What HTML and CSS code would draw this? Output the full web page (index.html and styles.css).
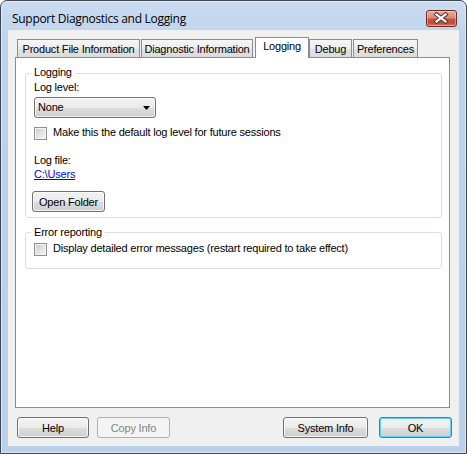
FILE: index.html
```html
<!DOCTYPE html>
<html>
<head>
<meta charset="utf-8">
<link rel="stylesheet" href="styles.css">
</head>
<body>
<div class="window">
  <div class="titlebar">
    <span class="title">Support Diagnostics and Logging</span>
    <div class="close">
      <svg width="29" height="15" viewBox="0 0 29 15">
        <path d="M9.5 3.5 L18.5 10.5 M18.5 3.5 L9.5 10.5" stroke="#5b3b35" stroke-width="4.2" stroke-linecap="square" fill="none"/>
        <path d="M9.5 3.5 L18.5 10.5 M18.5 3.5 L9.5 10.5" stroke="#ffffff" stroke-width="2.2" stroke-linecap="square" fill="none"/>
      </svg>
    </div>
  </div>
  <div class="client">
    <div class="tabs">
      <div class="tab w1">Product File Information</div>
      <div class="tab w2">Diagnostic Information</div>
      <div class="tab sel w3">Logging</div>
      <div class="tab w4">Debug</div>
      <div class="tab w5">Preferences</div>
    </div>
    <div class="panel">
      <div class="group g1">
        <div class="gtitle">Logging</div>
        <div class="label l1">Log level:</div>
        <div class="combo">
          <span class="combo-text">None</span>
          <svg class="arrow" width="7" height="4" viewBox="0 0 7 4"><polygon points="0,0 7,0 3.5,4" fill="#000"/></svg>
        </div>
        <div class="check c1"><span class="box"></span><span>Make this the default log level for future sessions</span></div>
        <div class="label l2">Log file:</div>
        <div class="linkrow"><a class="link">C:\Users</a></div>
        <div class="btn open">Open Folder</div>
      </div>
      <div class="group g2">
        <div class="gtitle">Error reporting</div>
        <div class="check c2"><span class="box"></span><span>Display detailed error messages (restart required to take effect)</span></div>
      </div>
    </div>
    <div class="buttons">
      <div class="btn help">Help</div>
      <div class="btn copy disabled">Copy Info</div>
      <div class="btn sys">System Info</div>
      <div class="btn ok default">OK</div>
    </div>
  </div>
</div>
</body>
</html>
```

FILE: styles.css
```css
* { box-sizing: border-box; }
html, body { margin: 0; padding: 0; }
body {
  width: 467px;
  height: 454px;
  overflow: hidden;
  background: #ffffff;
  font-family: "Liberation Sans", Arial, sans-serif;
  font-size: 11px;
  line-height: 13px;
  letter-spacing: -0.2px;
  color: #000;
}
.window {
  width: 467px;
  height: 454px;
  border: 1px solid #3d4652;
  border-radius: 7px 7px 0 0;
  background: linear-gradient(#cbdcf0, #bdd3eb 40px, #b9d1ea);
  padding: 0 7px 7px 7px;
  display: flex;
  flex-direction: column;
  box-shadow: inset 0 0 0 1px rgba(255,255,255,0.45);
}
.titlebar {
  height: 29px;
  display: flex;
  align-items: flex-start;
}
.title {
  font-family: "Open Sans", "Noto Sans", sans-serif;
  font-size: 12px;
  letter-spacing: -0.3px;
  line-height: 16px;
  margin: 10px 0 0 4px;
  color: #000;
}
.close {
  margin-left: auto;
  margin-top: 9px;
  margin-right: 2px;
  width: 31px;
  height: 17px;
  border: 1px solid #6f2b22;
  border-radius: 3px;
  background: linear-gradient(#e8ad9f, #d98a78 45%, #c8553d 55%, #c24a33 80%, #d77c66);
  box-shadow: inset 0 0 0 1px rgba(255,255,255,0.35);
  display: flex;
}
.close svg { display: block; }
.client {
  width: 451px;
  height: 416px;
  background: #f0f0f0;
  padding: 7px 7px 0 7px;
  display: flex;
  flex-direction: column;
}
.tabs {
  display: flex;
  align-items: flex-end;
  height: 20px;
  padding-left: 2px;
}
.tab {
  height: 18px;
  border: 1px solid #898c95;
  border-bottom: none;
  background: linear-gradient(#f6f6f6, #ececec 50%, #e2e2e2 51%, #dcdcdc);
  text-align: center;
  padding-top: 3px;
  white-space: nowrap;
}
.tab.sel {
  height: 21px;
  background: #ffffff;
  margin-bottom: -1px;
  padding-top: 2px;
  position: relative;
  z-index: 1;
}
.w1 { width: 123px; }
.w2 { width: 112px; margin-left: 1px; }
.w3 { width: 54px; margin-left: 2px; }
.w4 { width: 43px; }
.w5 { width: 65px; margin-left: 1px; }
.panel {
  width: 435px;
  height: 351px;
  border: 1px solid #898c95;
  background: #ffffff;
  padding: 15px 7px 0 9px;
}
.group {
  border: 1px solid #d5dfe5;
  border-radius: 3px;
  padding: 0 8px;
}
.g1 { padding-bottom: 5px; }
.g2 { margin-top: 14px; padding-bottom: 13px; }
.gtitle {
  display: table;
  background: #ffffff;
  margin: -8px 0 0 -3px;
  padding: 0 3px;
}
.g2 .gtitle { margin-top: -7px; }
.l1 { margin-top: 2px; }
.combo {
  margin-top: 3px;
  width: 122px;
  height: 21px;
  border: 1px solid #707070;
  border-radius: 3px;
  background: linear-gradient(#f2f2f2, #ebebeb 50%, #dddddd 51%, #cfcfcf);
  box-shadow: inset 0 0 0 1px rgba(255,255,255,0.7);
  display: flex;
  align-items: center;
  padding: 0 5px 0 3px;
}
.combo-text { flex: 1; }
.arrow { display: block; }
.check {
  display: flex;
  align-items: flex-start;
  white-space: nowrap;
  height: 13px;
}
.c1 { margin-top: 8px; }
.c2 { margin-top: 3px; }
.box {
  width: 13px;
  height: 13px;
  margin-top: 1px;
  margin-right: 6px;
  border: 1px solid #8f8f8f;
  background: linear-gradient(135deg, #c5c9cf, #eaebec 70%, #f4f4f4);
  box-shadow: inset 0 0 0 1px #f4f4f4;
  flex: none;
}
.l2 { margin-top: 15px; }
.linkrow { margin-top: 1px; }
.link {
  color: #0000ff;
  text-decoration: underline;
}
.btn {
  height: 21px;
  border: 1px solid #707070;
  border-radius: 3px;
  background: linear-gradient(#f2f2f2, #ebebeb 50%, #dddddd 51%, #cfcfcf);
  box-shadow: inset 0 0 0 1px rgba(255,255,255,0.75);
  display: flex;
  align-items: center;
  justify-content: center;
  padding-top: 1px;
  white-space: nowrap;
}
.open { margin-top: 10px; width: 73px; margin-left: -2px; }
.buttons {
  display: flex;
  margin-top: 9px;
  padding-left: 2px;
}
.help { width: 72px; }
.copy { width: 73px; margin-left: 8px; }
.sys { width: 85px; margin-left: auto; }
.ok { width: 73px; margin-left: 11px; }
.btn.disabled {
  border-color: #adb2b5;
  background: #f4f4f4;
  box-shadow: none;
  color: #838383;
}
.btn.default {
  border-color: #3c7fb1;
  box-shadow: inset 0 0 0 1px #5fd3f7;
}
```
